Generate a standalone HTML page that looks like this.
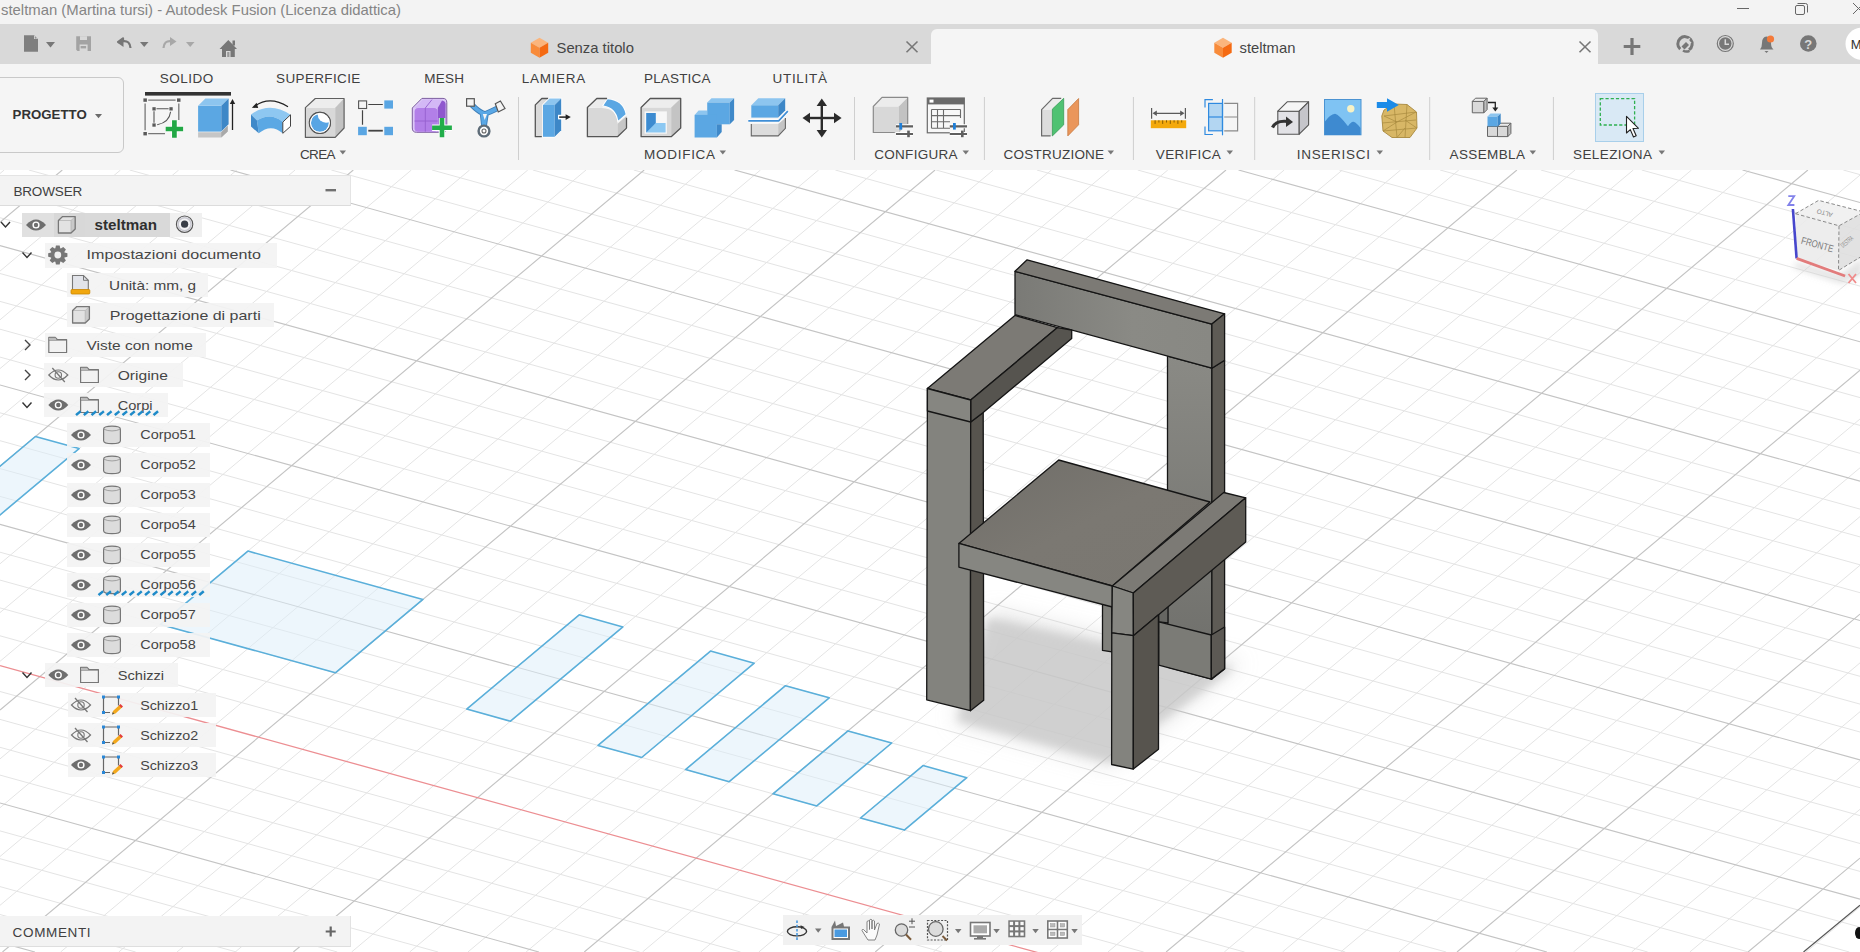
<!DOCTYPE html>
<html><head><meta charset="utf-8"><title>steltman - Autodesk Fusion</title>
<style>
html,body{margin:0;padding:0}
body{width:1860px;height:952px;overflow:hidden;position:relative;background:#fff;font-family:"Liberation Sans",sans-serif}
.abs{position:absolute}
svg text{font-family:"Liberation Sans",sans-serif}
</style></head><body>
<!-- 3D viewport -->
<svg class="abs" style="left:0;top:0" width="1860" height="952" viewBox="0 0 1860 952">
<defs>
<linearGradient id="gBackF" x1="0" y1="0" x2="1" y2="0"><stop offset="0" stop-color="#7a7a76"/><stop offset="0.6" stop-color="#8a8a85"/><stop offset="1" stop-color="#888883"/></linearGradient>
<linearGradient id="gLegR" x1="0" y1="0" x2="0" y2="1"><stop offset="0" stop-color="#8a8a85"/><stop offset="1" stop-color="#6e6e6a"/></linearGradient>
<linearGradient id="gSeat" x1="0" y1="0" x2="1" y2="1"><stop offset="0" stop-color="#6f6d68"/><stop offset="0.5" stop-color="#7b7872"/><stop offset="1" stop-color="#7a7771"/></linearGradient>
<clipPath id="vp"><rect x="0" y="170" width="1860" height="782"/></clipPath>
<filter id="blur3" x="-50%" y="-50%" width="200%" height="200%"><feGaussianBlur stdDeviation="3"/></filter>
<filter id="blur4" x="-30%" y="-30%" width="160%" height="160%"><feGaussianBlur stdDeviation="4"/></filter>
<filter id="blur8" x="-30%" y="-30%" width="160%" height="160%"><feGaussianBlur stdDeviation="10"/></filter>
</defs>
<g clip-path="url(#vp)">
<rect x="0" y="170" width="1860" height="782" fill="#ffffff"/>
<path d="M0.0 173.5L4.2 170.0M0.0 271.1L120.5 170.0M0.0 319.8L178.7 170.0M0.0 368.6L236.9 170.0M0.0 417.4L295.1 170.0M0.0 515.0L411.4 170.0M0.0 563.8L469.6 170.0M0.0 612.6L527.8 170.0M0.0 661.3L586.0 170.0M0.0 758.9L702.4 170.0M0.0 807.7L760.5 170.0M0.0 856.5L818.7 170.0M0.0 905.3L876.9 170.0M60.6 952.0L993.3 170.0M118.8 952.0L1051.5 170.0M177.0 952.0L1109.6 170.0M235.2 952.0L1167.8 170.0M351.6 952.0L1284.2 170.0M409.7 952.0L1342.4 170.0M467.9 952.0L1400.6 170.0M526.1 952.0L1458.8 170.0M642.5 952.0L1575.1 170.0M700.7 952.0L1633.3 170.0M758.8 952.0L1691.5 170.0M817.0 952.0L1749.7 170.0M933.4 952.0L1860.0 175.1M991.6 952.0L1860.0 223.8M1049.8 952.0L1860.0 272.6M1107.9 952.0L1860.0 321.4M1224.3 952.0L1860.0 419.0M1282.5 952.0L1860.0 467.8M1340.7 952.0L1860.0 516.6M1398.9 952.0L1860.0 565.3M1515.2 952.0L1860.0 662.9M1573.4 952.0L1860.0 711.7M1631.6 952.0L1860.0 760.5M1689.8 952.0L1860.0 809.3M1806.1 952.0L1860.0 906.8M0.0 914.5L135.7 952.0M0.0 886.6L236.5 952.0M0.0 858.7L337.3 952.0M0.0 830.9L438.1 952.0M0.0 775.1L639.7 952.0M0.0 747.3L740.5 952.0M0.0 719.4L841.3 952.0M0.0 691.5L942.1 952.0M0.0 635.8L1143.7 952.0M-0.0 607.9L1244.5 952.0M0.0 580.1L1345.3 952.0M0.0 552.2L1446.1 952.0M-0.0 496.4L1647.7 952.0M-0.0 468.6L1748.5 952.0M-0.0 440.7L1849.3 952.0M0.0 412.8L1860.0 927.1M0.0 357.1L1860.0 871.4M0.0 329.2L1860.0 843.5M0.0 301.4L1860.0 815.6M0.0 273.5L1860.0 787.7M0.0 217.7L1860.0 732.0M0.0 189.9L1860.0 704.1M28.9 170.0L1860.0 676.3M129.7 170.0L1860.0 648.4M331.3 170.0L1860.0 592.7M432.1 170.0L1860.0 564.8M532.9 170.0L1860.0 536.9M633.7 170.0L1860.0 509.1M835.3 170.0L1860.0 453.3M936.1 170.0L1860.0 425.4M1036.9 170.0L1860.0 397.6M1137.7 170.0L1860.0 369.7M1339.3 170.0L1860.0 314.0M1440.1 170.0L1860.0 286.1M1540.9 170.0L1860.0 258.2M1641.7 170.0L1860.0 230.4M1843.3 170.0L1860.0 174.6" stroke="#e4e4e4" stroke-width="1" fill="none"/>
<path d="M0.0 222.3L62.3 170.0M0.0 466.2L353.3 170.0M0.0 710.1L644.2 170.0M2.5 952.0L935.1 170.0M293.4 952.0L1226.0 170.0M584.3 952.0L1516.9 170.0M875.2 952.0L1807.9 170.0M1166.1 952.0L1860.0 370.2M1457.0 952.0L1860.0 614.1M1748.0 952.0L1860.0 858.1M0.0 942.4L34.9 952.0M0.0 803.0L538.9 952.0M0.0 524.3L1546.9 952.0M0.0 385.0L1860.0 899.2M0.0 245.6L1860.0 759.9M230.5 170.0L1860.0 620.5M734.5 170.0L1860.0 481.2M1238.5 170.0L1860.0 341.8M1742.5 170.0L1860.0 202.5" stroke="#c4c4c4" stroke-width="1.15" fill="none"/>
<path d="M0.0 663.7L1042.9 952.0" stroke="#ec8e92" stroke-width="1.3" fill="none" transform="translate(0,2)"/>
<g fill="#dcedfa" fill-opacity="0.5" stroke="#5aafda" stroke-width="1.6" stroke-linejoin="round"><polygon points="247.9,551.1 422.9,599.4 335.4,672.8 160.4,624.4"/><polygon points="35.4,436.5 79.1,448.6 -58.4,563.9 -102.1,551.8"/><polygon points="579.2,614.8 622.9,626.9 510.5,721.2 466.7,709.1"/><polygon points="710.5,651.1 754.2,663.2 641.7,757.5 598.0,745.4"/><polygon points="785.5,685.7 829.2,697.8 729.2,781.7 685.5,769.6"/><polygon points="848.0,730.9 891.7,743.0 816.8,805.9 773.0,793.8"/><polygon points="923.0,765.6 966.8,777.7 904.3,830.1 860.5,818.0"/></g>
<polygon points="992,610 1105,636 1242,662 1162,726 1112,766 954,722" fill="#c4c4c4" fill-opacity="0.45" filter="url(#blur8)"/><polygon points="988,618 1105,644 1234,668 1160,722 1112,763 957,721" fill="#c9c9c9" fill-opacity="0.75" filter="url(#blur4)"/>
<g stroke="#151515" stroke-width="1.3" stroke-linejoin="round"><polygon points="1167.5,356 1211.9,368.2 1211.9,679 1167.5,667" fill="url(#gLegR)"/><polygon points="1211.9,368.2 1224.6,360.3 1224.6,669 1211.9,679" fill="#5e5b55"/><polygon points="1158.4,600 1168,600 1168,623 1158.8,621.8" fill="#666662"/><polygon points="1158.8,621.8 1211.3,635 1211.3,679.1 1158.8,665.1" fill="#7b7b76"/><polygon points="1211.3,635 1224.6,627 1224.6,668.8 1211.3,679.1" fill="#5c5954"/><polygon points="1015,271.3 1211.9,324.1 1211.9,368.2 1015,314.6" fill="url(#gBackF)"/><polygon points="1027.1,259.8 1224.6,313.8 1211.9,324.1 1015,271.3" fill="#7c7a75"/><polygon points="1211.9,324.1 1224.6,313.8 1224.6,360.3 1211.9,368.2" fill="#5e5b55"/><polygon points="927.4,388.5 970.7,400 970.4,710.7 926.7,699.8" fill="#83837e"/><polygon points="970.7,422 983.2,412.5 983.7,700.2 970.4,710.7" fill="#57544e"/><polygon points="1014.9,315.4 1057.5,327.6 970.7,400 927.4,388.5" fill="#7c7a75"/><polygon points="970.7,400 1057.5,327.6 1071.7,330 1071.7,338.5 983.2,412.5 970.7,422" fill="#56544f"/><polygon points="927.4,388.5 970.7,400 970.7,422 927.4,411" fill="#868681"/><polygon points="1102.5,598 1111.8,600 1111.8,651.9 1102.5,650.4" fill="#80807b"/><polygon points="1058.7,460 1210,502 1112.3,586 958.9,543.4" fill="url(#gSeat)"/><polygon points="958.9,543.4 1112.3,586 1112.3,607 958.9,567.1" fill="#868681"/><polygon points="1112.3,586 1223.7,492.5 1245.7,497.8 1133.3,593" fill="#7c7a75"/><polygon points="1112.3,586 1133.3,593 1133.4,635.7 1111.8,632.8" fill="#868681"/><polygon points="1133.3,593 1245.7,497.8 1245.7,541.9 1133.4,635.7" fill="#5e5b55"/><polygon points="1111.8,632.8 1133.4,635.7 1133.3,769.1 1111.6,764.5" fill="#83837e"/><polygon points="1133.4,635.7 1158.4,614.8 1158.5,749.2 1133.3,769.1" fill="#57544e"/></g>

<g>
<polygon points="1796,262 1840,274 1862,258 1862,275 1842,284 1794,268" fill="#d0d0d0" fill-opacity="0.6" filter="url(#blur3)"/>
<polygon points="1795.5,213.7 1839,225.8 1838.5,270.5 1796.6,258.4" fill="#ebebeb" fill-opacity="0.88"/>
<polygon points="1818.6,200.4 1864,212 1839,225.8 1795.5,213.7" fill="#efefef" fill-opacity="0.88"/>
<polygon points="1839,225.8 1864,212 1864,256 1838.5,270.5" fill="#dedede" fill-opacity="0.88"/>
<g stroke="#8a8a8a" stroke-width="1" stroke-dasharray="3.5 2.2" fill="none">
<path d="M1795.5 213.7L1818.6 200.4L1864 212M1795.5 213.7L1839 225.8L1864 212M1839 225.8L1838.5 270.5L1862 256"/>
</g>
<text x="0" y="0" font-size="10" fill="#7a7a7a" transform="translate(1800.5,243.5) rotate(15.5)" textLength="33" lengthAdjust="spacingAndGlyphs">FRONTE</text>
<text x="0" y="0" font-size="6.5" fill="#8a8a8a" transform="translate(1833,213) rotate(195)" textLength="16" lengthAdjust="spacingAndGlyphs">ALTO</text>
<text x="0" y="0" font-size="7" fill="#8a8a8a" transform="translate(1843,248) rotate(-40)" textLength="14" lengthAdjust="spacingAndGlyphs">DESTRA</text>
<path d="M1792.9 209L1796.6 258.4" stroke="#4646cc" stroke-width="2.6"/>
<path d="M1796.6 258.4L1845.1 276" stroke="#e27c7c" stroke-width="2.8"/>
<path d="M1788.3 196.2H1794.2L1788.3 205H1794.4" stroke="#8282ea" stroke-width="1.8" fill="none"/>
<path d="M1848.5 274L1856 283M1856 274L1848.5 283" stroke="#f08a8a" stroke-width="1.8"/>
</g>
<path d="M1803.5 952L1860 905.3" stroke="#555" stroke-width="1.2"/>
<ellipse cx="1859" cy="933" rx="4" ry="6" fill="#111"/>

</g>
</svg>

<!-- title bar -->
<div class="abs" style="left:0;top:0;width:1860px;height:24px;background:#f3f3f3"></div>
<!-- tab bar -->
<div class="abs" style="left:0;top:24px;width:1860px;height:40px;background:#d9d9d9"></div>
<div class="abs" style="left:931px;top:29px;width:667px;height:35px;background:#f4f4f4;border-radius:6px 6px 0 0;background:#f5f5f5"></div>
<!-- toolbar -->
<div class="abs" style="left:0;top:64px;width:1860px;height:106px;background:#f5f5f5"></div>
<div class="abs" style="left:-8px;top:77px;width:130px;height:74px;border:1px solid #c9c9c9;border-radius:6px;background:#f5f5f5"></div>
<div class="abs" style="left:1595px;top:93px;width:47px;height:47px;background:#d9e9f5;border:1px solid #a8cfea"></div>

<!-- browser panel -->
<div class="abs" style="left:0;top:175px;width:350px;height:29px;background:#f3f3f3;border-top:1px solid #e4e4e4;border-bottom:1px solid #dcdcdc;border-right:1px solid #e4e4e4"></div>
<div class="abs" style="left:22px;top:213px;width:32px;height:24px;background:#e0e0e0"></div>
<div class="abs" style="left:54px;top:213px;width:31px;height:24px;background:#d8d8d8"></div>
<div class="abs" style="left:85px;top:213px;width:85px;height:24px;background:#d9d9d9"></div>
<div class="abs" style="left:170px;top:213px;width:32px;height:24px;background:#f0f0f0"></div>
<div class="abs" style="left:44.6px;top:243px;width:232.00000000000003px;height:25px;background:rgba(243,243,243,0.93)"></div>
<div class="abs" style="left:67.2px;top:272.5px;width:141.3px;height:24.5px;background:rgba(243,243,243,0.93)"></div>
<div class="abs" style="left:67.2px;top:302.6px;width:206.40000000000003px;height:24.399999999999977px;background:rgba(243,243,243,0.93)"></div>
<div class="abs" style="left:44.6px;top:332.7px;width:161.4px;height:24.30000000000001px;background:rgba(243,243,243,0.93)"></div>
<div class="abs" style="left:44.4px;top:363px;width:138.29999999999998px;height:24px;background:rgba(243,243,243,0.93)"></div>
<div class="abs" style="left:44.4px;top:393px;width:123.6px;height:24px;background:rgba(243,243,243,0.93)"></div>
<div class="abs" style="left:67.4px;top:423.3px;width:143.1px;height:24.0px;background:rgba(243,243,243,0.93)"></div>
<div class="abs" style="left:67.4px;top:453.3px;width:143.1px;height:24.0px;background:rgba(243,243,243,0.93)"></div>
<div class="abs" style="left:67.4px;top:483.3px;width:143.1px;height:24.0px;background:rgba(243,243,243,0.93)"></div>
<div class="abs" style="left:67.4px;top:513.3px;width:143.1px;height:24.0px;background:rgba(243,243,243,0.93)"></div>
<div class="abs" style="left:67.4px;top:543.3px;width:143.1px;height:24.0px;background:rgba(243,243,243,0.93)"></div>
<div class="abs" style="left:67.4px;top:573.3px;width:143.1px;height:24.0px;background:rgba(243,243,243,0.93)"></div>
<div class="abs" style="left:67.4px;top:603.3px;width:143.1px;height:24.0px;background:rgba(243,243,243,0.93)"></div>
<div class="abs" style="left:67.4px;top:633.3px;width:143.1px;height:24.0px;background:rgba(243,243,243,0.93)"></div>
<div class="abs" style="left:45px;top:663px;width:132.6px;height:24px;background:rgba(243,243,243,0.93)"></div>
<div class="abs" style="left:67.6px;top:693px;width:148.20000000000002px;height:24px;background:rgba(243,243,243,0.93)"></div>
<div class="abs" style="left:67.6px;top:723px;width:148.20000000000002px;height:24px;background:rgba(243,243,243,0.93)"></div>
<div class="abs" style="left:67.6px;top:753px;width:148.20000000000002px;height:24px;background:rgba(243,243,243,0.93)"></div>
<!-- comments -->
<div class="abs" style="left:0;top:916px;width:350px;height:30px;background:#f3f3f3;border-right:1px solid #e2e2e2;border-bottom:1px solid #dedede"></div>
<!-- nav bar -->
<div class="abs" style="left:783px;top:915px;width:299px;height:30px;background:#f1f1f1"></div>

<svg class="abs" style="left:0;top:0" width="1860" height="952" viewBox="0 0 1860 952">
<text x="1" y="15" font-size="15" font-weight="400" fill="#858585" text-anchor="start" textLength="400" lengthAdjust="spacingAndGlyphs" >steltman (Martina tursi) - Autodesk Fusion (Licenza didattica)</text>
<text x="556.5" y="52.8" font-size="15" font-weight="400" fill="#454545" text-anchor="start" textLength="77.4" lengthAdjust="spacingAndGlyphs" >Senza titolo</text>
<text x="1239.5" y="52.8" font-size="15" font-weight="400" fill="#454545" text-anchor="start" textLength="55.9" lengthAdjust="spacingAndGlyphs" >steltman</text>
<text x="12.6" y="119" font-size="13.5" font-weight="700" fill="#333" text-anchor="start" textLength="74.1" lengthAdjust="spacingAndGlyphs" >PROGETTO</text>
<polygon points="95,114 102,114 98.5,118.2" fill="#6b6b6b"/>
<text x="159.8" y="82.8" font-size="13.5" font-weight="400" fill="#404040" text-anchor="start" textLength="53.4" lengthAdjust="spacing" >SOLIDO</text>
<text x="276.1" y="82.8" font-size="13.5" font-weight="400" fill="#404040" text-anchor="start" textLength="84.2" lengthAdjust="spacing" >SUPERFICIE</text>
<text x="424.2" y="82.8" font-size="13.5" font-weight="400" fill="#404040" text-anchor="start" textLength="39.9" lengthAdjust="spacing" >MESH</text>
<text x="521.7" y="82.8" font-size="13.5" font-weight="400" fill="#404040" text-anchor="start" textLength="63.6" lengthAdjust="spacing" >LAMIERA</text>
<text x="644" y="82.8" font-size="13.5" font-weight="400" fill="#404040" text-anchor="start" textLength="66.4" lengthAdjust="spacing" >PLASTICA</text>
<text x="772.5" y="82.8" font-size="13.5" font-weight="400" fill="#404040" text-anchor="start" textLength="54.5" lengthAdjust="spacing" >UTILITÀ</text>
<rect x="145" y="92" width="86" height="3.6" fill="#333"/>
<text x="300" y="158.9" font-size="13.5" font-weight="400" fill="#404040" text-anchor="start" textLength="35.6" lengthAdjust="spacing" >CREA</text>
<polygon points="339.5,150.5 346,150.5 342.75,154.4" fill="#777"/>
<text x="644" y="158.9" font-size="13.5" font-weight="400" fill="#404040" text-anchor="start" textLength="71.1" lengthAdjust="spacing" >MODIFICA</text>
<polygon points="719.5,150.5 726,150.5 722.75,154.4" fill="#777"/>
<text x="874.2" y="158.9" font-size="13.5" font-weight="400" fill="#404040" text-anchor="start" textLength="83.4" lengthAdjust="spacing" >CONFIGURA</text>
<polygon points="962.5,150.5 969,150.5 965.75,154.4" fill="#777"/>
<text x="1003.6" y="158.9" font-size="13.5" font-weight="400" fill="#404040" text-anchor="start" textLength="100.5" lengthAdjust="spacing" >COSTRUZIONE</text>
<polygon points="1107.5,150.5 1114,150.5 1110.75,154.4" fill="#777"/>
<text x="1155.8" y="158.9" font-size="13.5" font-weight="400" fill="#404040" text-anchor="start" textLength="65" lengthAdjust="spacing" >VERIFICA</text>
<polygon points="1226.5,150.5 1233,150.5 1229.75,154.4" fill="#777"/>
<text x="1296.7" y="158.9" font-size="13.5" font-weight="400" fill="#404040" text-anchor="start" textLength="73.3" lengthAdjust="spacing" >INSERISCI</text>
<polygon points="1376.5,150.5 1383,150.5 1379.75,154.4" fill="#777"/>
<text x="1449.6" y="158.9" font-size="13.5" font-weight="400" fill="#404040" text-anchor="start" textLength="75.4" lengthAdjust="spacing" >ASSEMBLA</text>
<polygon points="1529.5,150.5 1536,150.5 1532.75,154.4" fill="#777"/>
<text x="1573" y="158.9" font-size="13.5" font-weight="400" fill="#404040" text-anchor="start" textLength="79" lengthAdjust="spacing" >SELEZIONA</text>
<polygon points="1658.5,150.5 1665,150.5 1661.75,154.4" fill="#777"/>
<rect x="518.0" y="97" width="1" height="63" fill="#cfcfcf"/>
<rect x="854.0" y="97" width="1" height="63" fill="#cfcfcf"/>
<rect x="983.9" y="97" width="1" height="63" fill="#cfcfcf"/>
<rect x="1132.9" y="97" width="1" height="63" fill="#cfcfcf"/>
<rect x="1254.2" y="97" width="1" height="63" fill="#cfcfcf"/>
<rect x="1429.2" y="97" width="1" height="63" fill="#cfcfcf"/>
<rect x="1552.9" y="97" width="1" height="63" fill="#cfcfcf"/>
<text x="13.4" y="195.8" font-size="13.5" font-weight="400" fill="#404040" text-anchor="start" textLength="68.9" lengthAdjust="spacing" >BROWSER</text>
<rect x="325.5" y="189" width="10.5" height="2.4" fill="#707070"/>
<text x="12.6" y="936.8" font-size="13.5" font-weight="400" fill="#404040" text-anchor="start" textLength="78" lengthAdjust="spacing" >COMMENTI</text>
<path d="M330.7 926.5v10M325.7 931.5h10" stroke="#666" stroke-width="2.2"/>
<text x="94.6" y="229.7" font-size="15" font-weight="700" fill="#2f2f2f" text-anchor="start" textLength="62.4" lengthAdjust="spacingAndGlyphs" >steltman</text>
<text x="86.6" y="259.2" font-size="13.5" font-weight="400" fill="#454545" text-anchor="start" textLength="174.3" lengthAdjust="spacingAndGlyphs" >Impostazioni documento</text>
<text x="109.1" y="290" font-size="13.5" font-weight="400" fill="#454545" text-anchor="start" textLength="87" lengthAdjust="spacingAndGlyphs" >Unità: mm, g</text>
<text x="109.7" y="320" font-size="13.5" font-weight="400" fill="#454545" text-anchor="start" textLength="151" lengthAdjust="spacingAndGlyphs" >Progettazione di parti</text>
<text x="86.6" y="350" font-size="13.5" font-weight="400" fill="#454545" text-anchor="start" textLength="106.2" lengthAdjust="spacingAndGlyphs" >Viste con nome</text>
<text x="117.7" y="379.5" font-size="13.5" font-weight="400" fill="#454545" text-anchor="start" textLength="50.3" lengthAdjust="spacingAndGlyphs" >Origine</text>
<text x="117.7" y="409.5" font-size="13.5" font-weight="400" fill="#454545" text-anchor="start" textLength="34.9" lengthAdjust="spacingAndGlyphs" >Corpi</text>
<text x="140.2" y="439.3" font-size="13.5" font-weight="400" fill="#454545" text-anchor="start" textLength="55.5" lengthAdjust="spacingAndGlyphs" >Corpo51</text>
<text x="140.2" y="469.3" font-size="13.5" font-weight="400" fill="#454545" text-anchor="start" textLength="55.5" lengthAdjust="spacingAndGlyphs" >Corpo52</text>
<text x="140.2" y="499.3" font-size="13.5" font-weight="400" fill="#454545" text-anchor="start" textLength="55.5" lengthAdjust="spacingAndGlyphs" >Corpo53</text>
<text x="140.2" y="529.3" font-size="13.5" font-weight="400" fill="#454545" text-anchor="start" textLength="55.5" lengthAdjust="spacingAndGlyphs" >Corpo54</text>
<text x="140.2" y="559.3" font-size="13.5" font-weight="400" fill="#454545" text-anchor="start" textLength="55.5" lengthAdjust="spacingAndGlyphs" >Corpo55</text>
<text x="140.2" y="589.3" font-size="13.5" font-weight="400" fill="#454545" text-anchor="start" textLength="55.5" lengthAdjust="spacingAndGlyphs" >Corpo56</text>
<text x="140.2" y="619.3" font-size="13.5" font-weight="400" fill="#454545" text-anchor="start" textLength="55.5" lengthAdjust="spacingAndGlyphs" >Corpo57</text>
<text x="140.2" y="649.3" font-size="13.5" font-weight="400" fill="#454545" text-anchor="start" textLength="55.5" lengthAdjust="spacingAndGlyphs" >Corpo58</text>
<text x="117.7" y="679.5" font-size="13.5" font-weight="400" fill="#454545" text-anchor="start" textLength="46.4" lengthAdjust="spacingAndGlyphs" >Schizzi</text>
<text x="140.2" y="709.5" font-size="13.5" font-weight="400" fill="#454545" text-anchor="start" textLength="58" lengthAdjust="spacingAndGlyphs" >Schizzo1</text>
<text x="140.2" y="739.5" font-size="13.5" font-weight="400" fill="#454545" text-anchor="start" textLength="58" lengthAdjust="spacingAndGlyphs" >Schizzo2</text>
<text x="140.2" y="769.5" font-size="13.5" font-weight="400" fill="#454545" text-anchor="start" textLength="58" lengthAdjust="spacingAndGlyphs" >Schizzo3</text>
<g fill="#5a5a5a"><rect x="143.4" y="98.4" width="3.5" height="3.4"/><rect x="177" y="98.4" width="3.5" height="3.4"/><rect x="143.4" y="132" width="3.5" height="3.4"/><rect x="152.4" y="107.2" width="3.3" height="3.3"/><rect x="169.4" y="107.2" width="3.3" height="3.3"/><rect x="152.4" y="123.4" width="3.3" height="3.3"/></g>
<path d="M148.2 100.1H175.6M145.1 103.5V130.2M148.2 133.7H165M178.8 103.5V120" stroke="#777" stroke-width="1.3"/>
<path d="M156.5 108.8H168.6M154 111.3V122.7M170.6 111.8Q169.3 122.5 157.2 124.8" stroke="#555" stroke-width="1.1" fill="none"/>
<path d="M165.8 129H183.2M174.4 120.4V137.6" stroke="#fff" stroke-width="6.4"/>
<path d="M165.70000000000002 129H183.1M174.4 120.3V137.7" stroke="#22a845" stroke-width="4.7"/>
<polygon points="198.1,132.3 221.3,132.3 227.7,125.7 227.7,131.4 221.3,137.6 198.1,137.6" fill="#c6c6c6"/><polygon points="221.3,132.3 227.7,125.7 227.7,131.4 221.3,137.6" fill="#a9a9a9"/>
<g><polygon points="198.1,105.8 221.3,105.8 221.3,131.6 198.1,131.6" fill="#5ba7e3"/><polygon points="198.1,105.8 205.4,98.5 228.6,98.5 221.3,105.8" fill="#8dc5ef"/><polygon points="221.3,105.8 228.6,98.5 228.6,124.3 221.3,131.6" fill="#3d87c7"/></g>
<path d="M232.5 130V102" stroke="#222" stroke-width="1.3"/><polygon points="229.8,104 232.5,99 235.2,104" fill="#222"/>
<path d="M255 106Q270 95.5 288 106.8" stroke="#222" stroke-width="1.2" fill="none"/><polygon points="251.8,107.8 256.6,102.8 258.2,108" fill="#222"/>
<path d="M251 114.4Q270 101 290.5 114.8L282.8 122.1Q271 112 257 120.4Z" fill="#8ec7f1"/>
<path d="M257 120.4Q271 112 282.8 122.1V133.3Q271 123 258.7 133.3Z" fill="#5ba8e4"/>
<polygon points="251,114.4 257,120.4 258.7,133.3 251,126.4" fill="#3f89c9"/>
<polygon points="282.8,122.1 290.5,114.8 290.5,126.4 282.8,133.3" fill="#fff" stroke="#444" stroke-width="1"/>
<polygon points="305.6,107.8 335.2,107.8 335.2,137.2 305.6,137.2" fill="#d8d8d8"/><polygon points="305.6,107.8 315.3,98.6 344,98.6 335.2,107.8" fill="#ededed"/><polygon points="335.2,107.8 344,98.6 344,128 335.2,137.2" fill="#c2c2c2"/>
<polygon points="305.4,107.6 315.3,98.5 344.1,98.5 344.1,128 335.2,137.4 305.4,137.4" fill="none" stroke="#5f5f5f" stroke-width="1.2" stroke-linejoin="round"/>
<circle cx="319.9" cy="122.9" r="10.5" fill="#fff" stroke="#555" stroke-width="1.1"/><circle cx="319.9" cy="122.9" r="8.9" fill="#58a5e4"/>
<clipPath id="holeclip"><circle cx="319.9" cy="122.9" r="10"/></clipPath><circle cx="326" cy="114.5" r="8.3" fill="#fff" clip-path="url(#holeclip)"/><circle cx="319.9" cy="122.9" r="10.5" fill="none" stroke="#555" stroke-width="1.1"/><circle cx="319.9" cy="122.9" r="9.6" fill="none" stroke="#fff" stroke-width="0.9"/>
<path d="M368.3 104.5H382.8M362.5 110.3V124.8" stroke="#444" stroke-width="1.2"/><path d="M368.3 130.7H382.8" stroke="#444" stroke-width="1.8"/>
<rect x="358.6" y="100.9" width="8" height="7.6" fill="#f4f4f4" stroke="#555" stroke-width="1.1"/>
<g fill="#5aa6e3"><rect x="384.3" y="100.4" width="8.7" height="8.2"/><rect x="358.1" y="126.8" width="8.7" height="8.4"/><rect x="384.3" y="126.8" width="8.7" height="8.4"/></g>
<path d="M421.9 98.4H443Q446.8 98.4 446.8 102.5V128Q446.8 132.3 442.5 132.3H416.5Q412.3 132.3 412.3 128V108Z" fill="#dcc8f7" stroke="#7d5ea0" stroke-width="1"/>
<path d="M414.6 108L423 99.6H442L437.7 108Z" fill="#d3b8f6"/>
<path d="M437.7 108L442 100.5Q445.6 101 445.6 104V125L437.7 131.7Z" fill="#8f57ce"/>
<rect x="414.6" y="108" width="23.1" height="23.7" rx="3.5" fill="#b27fe8"/>
<path d="M425.3 108V131.7M414.6 121H437.7M425.3 108L432 99.6" stroke="#9560cf" stroke-width="0.9" fill="none"/>
<path d="M432.1 127.7H451.9M442 118.1V137.3" stroke="#fff" stroke-width="6.5"/><path d="M432.1 127.7H451.9M442 118.1V137.3" stroke="#22ad4a" stroke-width="4.6"/>
<path d="M472 105Q478 111 482.5 113L484 126.5M496 109Q490 112 486 113.5L484 126.5" stroke="#3f7fb8" stroke-width="5.6" fill="none" stroke-linecap="round"/>
<path d="M472 105Q478 111 482.5 113L484 126.5M496 109Q490 112 486 113.5L484 126.5" stroke="#5aa8e6" stroke-width="3.8" fill="none" stroke-linecap="round"/>
<polygon points="482,112 488,112 484.6,122" fill="#5aa8e6"/><polygon points="482.8,114 487,114 484.7,120" fill="#f4f4f4"/>
<rect x="466.6" y="98.7" width="7.7" height="7.5" fill="#f4f4f4" stroke="#555" stroke-width="1.2"/>
<polygon points="495.3,103.8 500.4,101 505,108.5 498.3,112" fill="#f4f4f4" stroke="#555" stroke-width="1.2"/>
<circle cx="484" cy="131" r="6.6" fill="#5e6c78"/><circle cx="484" cy="131" r="4.2" fill="#fff"/><circle cx="484" cy="131" r="2" fill="none" stroke="#666" stroke-width="1.1"/>
<polygon points="535.3,104.9 541.8,98.5 548.2,98.5 543,104.9 543,136.7 535.3,136.7" fill="#dadada"/>
<path d="M548.2 98.5H541.8L535.3 104.9V136.7H541.8" stroke="#555" stroke-width="1.3" fill="none" stroke-linejoin="round"/>
<polygon points="542.3,104.6 549.2,97.8 562.2,97.8 562.2,130.1 555,137.4 542.3,137.4" fill="#fff"/>
<g><polygon points="543,105 554.7,105 554.7,136.8 543,136.8" fill="#5ba7e3"/><polygon points="543,105 549.5,98.5 561.2,98.5 554.7,105" fill="#8dc5ef"/><polygon points="554.7,105 561.2,98.5 561.2,130.3 554.7,136.8" fill="#3d87c7"/></g>
<rect x="558" y="114.8" width="4.2" height="4.6" fill="#fff"/><path d="M559.2 117.1H566.5" stroke="#222" stroke-width="1.5"/><polygon points="565.6,114.3 570.8,117.1 565.6,120" fill="#222"/>
<polygon points="587.4,107.5 596.8,98.5 607.1,98.5 602,107.9" fill="#ececec"/>
<path d="M587.4 107.9H602Q617.5 108.5 617.5 123.8V136.7H587.4Z" fill="#d8d8d8"/>
<polygon points="617.5,123.8 626.5,116.1 626.5,128.1 617.5,136.7" fill="#c6c6c6"/>
<path d="M607.1 98.5Q624 99.5 626.5 114.4L617.5 122.1Q615.5 108 602 105.8Z" fill="#fff"/><path d="M607.6 99.3Q622.8 100.5 625.6 114.2L618.3 120.6Q616 107.6 603.5 105.6Z" fill="#5ba7e3"/>
<path d="M607.1 98.5H596.8L587.4 107.5V136.7H617.5L626.5 128.1V117.8" stroke="#555" stroke-width="1.3" fill="none" stroke-linejoin="round"/>
<polygon points="641.1,107.5 671.2,107.5 671.2,136.7 641.1,136.7" fill="#d8d8d8"/><polygon points="641.1,107.5 650.2,98.5 680.7,98.5 671.2,107.5" fill="#ededed"/><polygon points="671.2,107.5 680.7,98.5 680.7,128.1 671.2,136.7" fill="#c4c4c4"/>
<polygon points="641.1,107.5 650.2,98.5 680.7,98.5 680.7,128.1 671.2,136.7 641.1,136.7" fill="none" stroke="#555" stroke-width="1.3" stroke-linejoin="round"/>
<rect x="644.6" y="111.4" width="22.3" height="22.3" fill="#f7f7f7"/><polygon points="646.3,113.1 655.7,113.1 655.7,123 665.6,123 665.6,132.4 646.3,132.4" fill="#8cc8f2"/><polygon points="646.3,113.1 655.7,113.1 655.7,123 646.3,132.4" fill="#3d8bd0"/>
<polygon points="707.2,102.5 711.5,98.2 734.1,98.2 729.8,102.5" fill="#8dc5ef"/>
<polygon points="694.6,114.9 698.6,110.6 707.2,110.6 707.2,114.9" fill="#8dc5ef"/>
<polygon points="707.2,102.5 729.8,102.5 729.8,124.3 707.2,124.3" fill="#5ba7e3"/>
<rect x="694.6" y="114.9" width="22.3" height="22.6" fill="#5ba7e3"/>
<polygon points="729.8,102.5 734.1,98.2 734.1,120 729.8,124.3" fill="#3f89c9"/>
<polygon points="716.9,124.3 721.7,124.3 721.7,132.1 716.9,137.5" fill="#3f89c9"/>
<polygon points="751.3,124 778.2,124 778.2,135.9 751.3,135.9" fill="#dcdcdc"/><polygon points="778.2,124 785.4,118.1 785.4,128.3 778.2,135.9" fill="#c4c4c4"/>
<path d="M751.3 124V135.9H778.2L785.4 128.3V118.1" stroke="#666" stroke-width="1.1" fill="none"/>
<path d="M748.3 120.8H778.7L787.8 111.1" stroke="#fff" stroke-width="3.2" fill="none"/><path d="M748.3 120.8H778.7L787.8 111.1" stroke="#3f8ed6" stroke-width="1.7" fill="none"/>
<g><polygon points="751.3,105.2 778.2,105.2 778.2,117.6 751.3,117.6" fill="#5ba7e3"/><polygon points="751.3,105.2 758.3,98.2 785.2,98.2 778.2,105.2" fill="#8dc5ef"/><polygon points="778.2,105.2 785.2,98.2 785.2,110.6 778.2,117.6" fill="#3d87c7"/></g>
<g fill="#2b2b2b"><path d="M820.6 104H823V132H820.6Z"/><path d="M808 116.8H836V119.2H808Z"/><polygon points="821.8,98.6 827,106 816.6,106"/><polygon points="821.8,137.4 827,130 816.6,130"/><polygon points="802.5,118 810,112.8 810,123.2"/><polygon points="841.6,118 834,112.8 834,123.2"/></g>
<g><polygon points="873.3,106.5 898.8,106.5 898.8,132.7 873.3,132.7" fill="#d8d8d8"/><polygon points="873.3,106.5 882.5,97.3 908,97.3 898.8,106.5" fill="#ececec"/><polygon points="898.8,106.5 908,97.3 908,123.5 898.8,132.7" fill="#c2c2c2"/></g>
<path d="M894.8 132.5H873.3V106.5L882 97.3H907.7V124" stroke="#8a8a8a" stroke-width="1.2" fill="none" stroke-linejoin="round"/>
<path d="M896 126.3H913M896 134H913" stroke="#fff" stroke-width="4"/><path d="M896 126.3H913M896 134H913" stroke="#5f5f5f" stroke-width="2.2"/><rect x="899.3" y="123" width="2.8" height="6.6" fill="#1f7fd8"/><rect x="907.2" y="130.6" width="2.6" height="6.6" fill="#5f5f5f"/>
<rect x="927.3" y="98" width="37" height="34.8" fill="#f7f7f7" stroke="#6a6a6a" stroke-width="1.2"/><rect x="927.3" y="98" width="37" height="6.4" fill="#6a6a6a"/><rect x="929.5" y="99.6" width="4" height="3" fill="#fff"/>
<path d="M931.5 109.5H960.5M931.5 115.6H960.5M931.5 121.8H950M931.5 128.2H950M931.5 109.5V128.2M937.5 109.5V128.2M943.5 109.5V128.2M960.5 109.5V118" stroke="#6a6a6a" stroke-width="1.1" fill="none"/>
<path d="M949.8 126.3H967M949.8 134H967" stroke="#fff" stroke-width="4"/><path d="M949.8 126.3H967M949.8 134H967" stroke="#5f5f5f" stroke-width="2.2"/><rect x="953" y="123" width="2.8" height="6.6" fill="#1f7fd8"/><rect x="961" y="130.6" width="2.6" height="6.6" fill="#5f5f5f"/>
<polygon points="1041.6,109.6 1052.4,109.6 1052.4,135.9 1041.6,135.9" fill="#dcdcdc"/><polygon points="1041.6,109.6 1052.6,98.3 1061.2,98.3 1052.4,109.1" fill="#ececec"/>
<path d="M1050.6 135.9H1041.6V109.6L1052.6 98.3H1061.2" stroke="#6a6a6a" stroke-width="1.2" fill="none" stroke-linejoin="round"/>
<polygon points="1052.4,109.1 1063.7,98.3 1063.7,124.8 1052.4,135.9" fill="#4fc272" stroke="#3a9a58" stroke-width="0.8"/>
<polygon points="1067.8,109.6 1078.6,98.5 1078.6,124.8 1067.8,135.9" fill="#ea965b" stroke="#c77a40" stroke-width="0.8"/>
<rect x="1150.8" y="120.3" width="35.4" height="7.9" fill="#f4a90b"/><path d="M1155.1 120.3v3.6M1158.9 120.3v2.2M1162.7 120.3v3.6M1166.5 120.3v2.2M1170.3 120.3v3.6M1174.1 120.3v2.2M1177.9 120.3v3.6M1181.7 120.3v2.2" stroke="#7a5200" stroke-width="0.9"/>
<path d="M1151.6 108V118.8M1185.4 108V118.8M1154 113.3H1183" stroke="#5a5a5a" stroke-width="1.2"/><polygon points="1152.5,113.3 1156.8,110.5 1156.8,116.1" fill="#5a5a5a"/><polygon points="1184.5,113.3 1180.2,110.5 1180.2,116.1" fill="#5a5a5a"/>
<rect x="1208.6" y="103.4" width="13.9" height="27.4" fill="#b3d6f2" stroke="#2f8ae0" stroke-width="1.2"/><path d="M1208.6 117H1222.5" stroke="#2f8ae0" stroke-width="1.2"/>
<path d="M1224.2 103.4H1237.6V130.8H1224.2M1224.2 117H1237.6" stroke="#8a8a8a" stroke-width="1.2" fill="none"/>
<path d="M1212.9 99.6H1205V107.4M1205 126.6V134.5H1212.9" stroke="#2f8ae0" stroke-width="1.2" fill="none"/><path d="M1222.5 99V135.3" stroke="#2f8ae0" stroke-width="1.2"/>
<g stroke="#555" stroke-width="1.1" stroke-linejoin="round"><polygon points="1277.8,111.2 1299.2,111.2 1299.2,134.2 1277.8,134.2" fill="#e2e2e6"/><polygon points="1277.8,111.2 1287.2,101.8 1308.6,101.8 1299.2,111.2" fill="#f6f6f6"/><polygon points="1299.2,111.2 1308.6,101.8 1308.6,124.8 1299.2,134.2" fill="#c5c5ca"/></g>
<path d="M1272.5 127.5Q1276 120 1288 121.5" stroke="#333" stroke-width="3.2" fill="none"/><polygon points="1286,116.5 1293,122 1286,127" fill="#333"/>
<rect x="1324.5" y="99.5" width="36.5" height="35.3" fill="#7fc3f3" stroke="#4b93d2" stroke-width="1"/><path d="M1325 135V121.5Q1330 114.5 1335 113.8Q1339 114.5 1348 126.3Q1351 121.5 1353.5 121.8Q1357 123 1360.5 128V135Z" fill="#3e8ad0"/><circle cx="1350.8" cy="108.8" r="3.7" fill="#f7f2c6"/>
<polygon points="1384,110 1394,104 1407,104.5 1416.5,112 1417,128 1410,137.5 1392,137.5 1383,131 1381.8,116" fill="#d8b766" stroke="#a8893e" stroke-width="0.9"/>
<path d="M1384 116L1416 112M1382 123L1416 120M1383 131L1416.8 128M1394 104L1397 137.5M1407 104.5L1405 137.5M1384 116L1397 122L1383 131M1397 122L1416 112M1405 120L1416.8 128M1397 137.5L1405 128" stroke="#a8893e" stroke-width="0.7" fill="none"/>
<polygon points="1376.8,102 1387,102 1387,98.3 1398.8,105 1387,111.8 1387,108 1376.8,108" fill="#1b8be8"/>
<g stroke="#666" stroke-width="1" stroke-linejoin="round"><polygon points="1472.3,101.4 1483.9,101.4 1483.9,112.8 1472.3,112.8" fill="#d9d9d9"/><polygon points="1472.3,101.4 1475.5,98.2 1487.1,98.2 1483.9,101.4" fill="#ebebeb"/><polygon points="1483.9,101.4 1487.1,98.2 1487.1,109.6 1483.9,112.8" fill="#bdbdbd"/></g>
<path d="M1488 102.5H1495.3V108" stroke="#222" stroke-width="1.3" fill="none"/><polygon points="1492.3,107.5 1498.3,107.5 1495.3,111.5" fill="#222"/>
<g stroke="#666" stroke-width="1" stroke-linejoin="round"><polygon points="1497.5,126.3 1507.8,126.3 1507.8,136.6 1497.5,136.6" fill="#d9d9d9"/><polygon points="1497.5,126.3 1500.6,123.2 1510.9,123.2 1507.8,126.3" fill="#ebebeb"/><polygon points="1507.8,126.3 1510.9,123.2 1510.9,133.5 1507.8,136.6" fill="#bdbdbd"/></g>
<g stroke="#666" stroke-width="1" stroke-linejoin="round"><polygon points="1487.5,126.41 1497.5,126.41 1497.5,136.41 1487.5,136.41" fill="#d9d9d9"/><polygon points="1487.5,126.41 1487.51,126.4 1497.51,126.4 1497.5,126.41" fill="#ebebeb"/><polygon points="1497.5,126.41 1497.51,126.4 1497.51,136.4 1497.5,136.41" fill="#bdbdbd"/></g>
<g><polygon points="1487.5,116.4 1497.7,116.4 1497.7,126.4 1487.5,126.4" fill="#5ba7e3"/><polygon points="1487.5,116.4 1490.5,113.4 1500.7,113.4 1497.7,116.4" fill="#8dc5ef"/><polygon points="1497.7,116.4 1500.7,113.4 1500.7,123.4 1497.7,126.4" fill="#3d87c7"/></g>
<rect x="1600.3" y="98.7" width="34.3" height="26.3" fill="none" stroke="#2fb050" stroke-width="1.3" stroke-dasharray="3.2 2"/>
<path d="M1626.5 116.3L1626.5 133L1630.3 129.6L1633.5 137L1636.2 135.8L1633 128.5L1638.5 128.3Z" fill="#fff" stroke="#222" stroke-width="1.1" stroke-linejoin="round"/>
<path d="M1737 8.5H1749" stroke="#666" stroke-width="1"/>
<rect x="1795.5" y="5.5" width="9" height="9" rx="1.5" fill="none" stroke="#666" stroke-width="1"/><path d="M1797.5 3.5H1805.5Q1807.5 3.5 1807.5 5.5V12.5" stroke="#666" stroke-width="1" fill="none"/>
<path d="M1853 3L1864 14M1864 3L1853 14" stroke="#666" stroke-width="1"/>
<path d="M24 35.2H34.2L38 39V51.8H24Z" fill="#7f7f7f"/><path d="M34 35.2V39H38Z" fill="#d9d9d9"/><path d="M34.8 36.5L36.8 38.5H34.8Z" fill="#7f7f7f"/>
<polygon points="46,42 55,42 50.5,47.5" fill="#777"/>
<path d="M76.2 36.2H91V51H77.5L76.2 49.7Z" fill="#a3a3a3"/><rect x="80" y="36.2" width="7" height="3.8" fill="#d9d9d9"/><rect x="79.6" y="44.5" width="8" height="6.5" fill="#d9d9d9"/><rect x="80.6" y="46" width="5.5" height="2.4" fill="#a3a3a3"/>
<path d="M117.5 42.5L123 38.5V41.2Q130 40.5 130.5 48" stroke="#777" stroke-width="2.2" fill="none" stroke-linejoin="round"/><polygon points="117,42.5 123.5,37.5 123.5,47" fill="#777"/>
<polygon points="140,42 148.5,42 144.2,47" fill="#777"/>
<path d="M163.5 48Q164 40.5 171 41.2" stroke="#a8a8a8" stroke-width="2.2" fill="none"/><polygon points="176.5,41.5 170,37 170,46" fill="#a8a8a8"/>
<polygon points="186,42 194.5,42 190.2,47" fill="#a8a8a8"/>
<path d="M219.5 49L228.3 40L237 49H234.8V57H222V49Z" fill="#777"/><rect x="232.5" y="40.5" width="2.5" height="5" fill="#777"/><rect x="226" y="51" width="4.5" height="6" fill="#d9d9d9"/><rect x="227.2" y="52" width="2.2" height="5" fill="#999"/>
<polygon points="539.5,37.8 548.2,42.8 539.5,47.8 530.8,42.8" fill="#fbb57c"/><polygon points="530.8,42.8 539.5,47.8 539.5,57.8 530.8,52.8" fill="#f88b3a"/><polygon points="539.5,47.8 548.2,42.8 548.2,52.8 539.5,57.8" fill="#f56a12"/>
<polygon points="1223,37.8 1231.7,42.8 1223,47.8 1214.3,42.8" fill="#fbb57c"/><polygon points="1214.3,42.8 1223,47.8 1223,57.8 1214.3,52.8" fill="#f88b3a"/><polygon points="1223,47.8 1231.7,42.8 1231.7,52.8 1223,57.8" fill="#f56a12"/>
<path d="M906.5 41.5L917.5 52.3M917.5 41.5L906.5 52.3" stroke="#777" stroke-width="1.6"/>
<path d="M1579.5 41.5L1590.5 52.3M1590.5 41.5L1579.5 52.3" stroke="#777" stroke-width="1.6"/>
<path d="M1632 38V55M1623.7 46.5H1640.3" stroke="#777" stroke-width="3.2"/>
<path d="M1680.2 49.2A7.2 7.2 0 1 1 1689 49.8" stroke="#777" stroke-width="3" fill="none"/><path d="M1683 50.5Q1686 52.5 1689.5 50.8" stroke="#777" stroke-width="2.4" fill="none"/><path d="M1684.5 43.5L1689.8 38.2M1687 46L1691 42" stroke="#d9d9d9" stroke-width="1.5"/><path d="M1681.5 46.5L1686 42L1689 45L1684.5 49.5Z" fill="#777"/>
<circle cx="1725.3" cy="43.5" r="8" fill="none" stroke="#777" stroke-width="1.2"/><circle cx="1725.3" cy="43.5" r="6.2" fill="#777"/><path d="M1725.3 39.2V44.3H1729" stroke="#d9d9d9" stroke-width="1.5" fill="none"/>
<path d="M1760 49.5Q1762 47.5 1762 43Q1762 37 1766.5 36.5Q1771 37 1771 43Q1771 47.5 1773.5 49.5Z" fill="#777"/><path d="M1764.5 51H1768.5L1766.5 53Z" fill="#777"/><circle cx="1770.5" cy="39" r="3.6" fill="#f47a3a"/>
<circle cx="1808.3" cy="43.5" r="8.3" fill="#777"/><text x="1808.3" y="48.5" font-size="13" font-weight="700" fill="#d9d9d9" text-anchor="middle">?</text>
<circle cx="1861.5" cy="43.8" r="16" fill="#fff"/><text x="1850.8" y="48.6" font-size="13" fill="#333">M</text>
<path d="M1 222L5.5 227L10 222" stroke="#333" stroke-width="1.4" fill="none"/>
<path d="M26 225Q36 214 46 225Q36 236 26 225Z" fill="#6e6e6e"/><circle cx="36" cy="225" r="3.6" fill="#fff"/><circle cx="36" cy="225" r="2.2" fill="#6e6e6e"/>
<path d="M58.4 220.5L62.599999999999994 216.6H75.19999999999999V229L71.0 233H58.4Z" fill="#e2e2e2"/><polygon points="71.0,220.5 75.19999999999999,216.6 75.19999999999999,229 71.0,233" fill="#c9c9c9"/><path d="M58.4 220.5H71.0V233M71.0 220.5L75.19999999999999 216.6" stroke="#b5b5b5" stroke-width="0.8" fill="none"/><path d="M58.4 220.5L62.599999999999994 216.6H75.19999999999999V229L71.0 233H58.4Z" fill="none" stroke="#777" stroke-width="1.3" stroke-linejoin="round"/>
<circle cx="184.6" cy="224.2" r="8.2" fill="#f4f4f6" stroke="#555" stroke-width="1.1"/><circle cx="184.6" cy="224.2" r="6.5" fill="none" stroke="#c8c8d0" stroke-width="1.5"/><circle cx="184.6" cy="224.2" r="3.6" fill="#3a3f48"/>
<path d="M22.5 252.5L27.0 257.5L31.5 252.5" stroke="#333" stroke-width="1.4" fill="none"/>
<polygon points="67.42,253.13 67.42,256.87 64.57,257.46 64.33,258.04 65.92,260.48 63.28,263.12 60.84,261.53 60.26,261.77 59.67,264.62 55.93,264.62 55.34,261.77 54.76,261.53 52.32,263.12 49.68,260.48 51.27,258.04 51.03,257.46 48.18,256.87 48.18,253.13 51.03,252.54 51.27,251.96 49.68,249.52 52.32,246.88 54.76,248.47 55.34,248.23 55.93,245.38 59.67,245.38 60.26,248.23 60.84,248.47 63.28,246.88 65.92,249.52 64.33,251.96 64.57,252.54" fill="#777"/><circle cx="57.8" cy="255" r="3.4" fill="#f0f0f0"/>
<path d="M72.5 291V275.5H83.5L88.3 280.3V291Z" fill="#e2e4ea" stroke="#777" stroke-width="1.1"/><path d="M83.5 275.5V280.3H88.3" stroke="#777" stroke-width="1" fill="none"/><rect x="71" y="289.5" width="18.8" height="4.5" rx="1" fill="#f1a70e" stroke="#c98500" stroke-width="0.8"/>
<path d="M72.6 310.5L76.8 306.6H89.4V319L85.2 323H72.6Z" fill="#e2e2e2"/><polygon points="85.2,310.5 89.4,306.6 89.4,319 85.2,323" fill="#c9c9c9"/><path d="M72.6 310.5H85.2V323M85.2 310.5L89.4 306.6" stroke="#b5b5b5" stroke-width="0.8" fill="none"/><path d="M72.6 310.5L76.8 306.6H89.4V319L85.2 323H72.6Z" fill="none" stroke="#777" stroke-width="1.3" stroke-linejoin="round"/>
<path d="M25 340L30 345L25 350" stroke="#444" stroke-width="1.4" fill="none"/>
<path d="M48.800000000000004 352.5V337.3H55.2L57.2 339.5H66.6V352.5Z" fill="#f2f2f2" stroke="#777" stroke-width="1.2" stroke-linejoin="round"/><path d="M48.800000000000004 340.1H66.6" stroke="#777" stroke-width="1"/><rect x="49.400000000000006" y="337.8" width="6" height="2" fill="#bbb"/>
<path d="M25 370L30 375L25 380" stroke="#444" stroke-width="1.4" fill="none"/>
<path d="M48.8 375Q58.3 365 67.8 375Q58.3 385 48.8 375Z" fill="none" stroke="#777" stroke-width="1.2"/><circle cx="58.3" cy="375" r="3.2" fill="none" stroke="#777" stroke-width="1.1"/><path d="M52.3 368L64.8 382" stroke="#777" stroke-width="1.3"/>
<path d="M80.6 382.5V367.3H87L89 369.5H98.4V382.5Z" fill="#f2f2f2" stroke="#777" stroke-width="1.2" stroke-linejoin="round"/><path d="M80.6 370.1H98.4" stroke="#777" stroke-width="1"/><rect x="81.2" y="367.8" width="6" height="2" fill="#bbb"/>
<path d="M22.5 402.5L27.0 407.5L31.5 402.5" stroke="#333" stroke-width="1.4" fill="none"/>
<path d="M48.3 405Q58.3 394 68.3 405Q58.3 416 48.3 405Z" fill="#6e6e6e"/><circle cx="58.3" cy="405" r="3.6" fill="#fff"/><circle cx="58.3" cy="405" r="2.2" fill="#6e6e6e"/>
<path d="M80.6 412.5V397.3H87L89 399.5H98.4V412.5Z" fill="#f2f2f2" stroke="#777" stroke-width="1.2" stroke-linejoin="round"/><path d="M80.6 400.1H98.4" stroke="#777" stroke-width="1"/><rect x="81.2" y="397.8" width="6" height="2" fill="#bbb"/>
<path d="M71 435Q81 424 91 435Q81 446 71 435Z" fill="#6e6e6e"/><circle cx="81" cy="435" r="3.6" fill="#fff"/><circle cx="81" cy="435" r="2.2" fill="#6e6e6e"/>
<path d="M103.6 429.2Q103.6 426.2 112 426.2Q120.4 426.2 120.4 429.2V440.7Q120.4 443.59999999999997 112 443.59999999999997Q103.6 443.59999999999997 103.6 440.7Z" fill="#dcdcdc" stroke="#777" stroke-width="1.2"/><path d="M103.6 429.2Q112 432.7 120.4 429.2" stroke="#999" stroke-width="0.9" fill="none"/>
<path d="M71 465Q81 454 91 465Q81 476 71 465Z" fill="#6e6e6e"/><circle cx="81" cy="465" r="3.6" fill="#fff"/><circle cx="81" cy="465" r="2.2" fill="#6e6e6e"/>
<path d="M103.6 459.2Q103.6 456.2 112 456.2Q120.4 456.2 120.4 459.2V470.7Q120.4 473.59999999999997 112 473.59999999999997Q103.6 473.59999999999997 103.6 470.7Z" fill="#dcdcdc" stroke="#777" stroke-width="1.2"/><path d="M103.6 459.2Q112 462.7 120.4 459.2" stroke="#999" stroke-width="0.9" fill="none"/>
<path d="M71 495Q81 484 91 495Q81 506 71 495Z" fill="#6e6e6e"/><circle cx="81" cy="495" r="3.6" fill="#fff"/><circle cx="81" cy="495" r="2.2" fill="#6e6e6e"/>
<path d="M103.6 489.2Q103.6 486.2 112 486.2Q120.4 486.2 120.4 489.2V500.7Q120.4 503.59999999999997 112 503.59999999999997Q103.6 503.59999999999997 103.6 500.7Z" fill="#dcdcdc" stroke="#777" stroke-width="1.2"/><path d="M103.6 489.2Q112 492.7 120.4 489.2" stroke="#999" stroke-width="0.9" fill="none"/>
<path d="M71 525Q81 514 91 525Q81 536 71 525Z" fill="#6e6e6e"/><circle cx="81" cy="525" r="3.6" fill="#fff"/><circle cx="81" cy="525" r="2.2" fill="#6e6e6e"/>
<path d="M103.6 519.2Q103.6 516.2 112 516.2Q120.4 516.2 120.4 519.2V530.7Q120.4 533.6 112 533.6Q103.6 533.6 103.6 530.7Z" fill="#dcdcdc" stroke="#777" stroke-width="1.2"/><path d="M103.6 519.2Q112 522.7 120.4 519.2" stroke="#999" stroke-width="0.9" fill="none"/>
<path d="M71 555Q81 544 91 555Q81 566 71 555Z" fill="#6e6e6e"/><circle cx="81" cy="555" r="3.6" fill="#fff"/><circle cx="81" cy="555" r="2.2" fill="#6e6e6e"/>
<path d="M103.6 549.2Q103.6 546.2 112 546.2Q120.4 546.2 120.4 549.2V560.7Q120.4 563.6 112 563.6Q103.6 563.6 103.6 560.7Z" fill="#dcdcdc" stroke="#777" stroke-width="1.2"/><path d="M103.6 549.2Q112 552.7 120.4 549.2" stroke="#999" stroke-width="0.9" fill="none"/>
<path d="M71 585Q81 574 91 585Q81 596 71 585Z" fill="#6e6e6e"/><circle cx="81" cy="585" r="3.6" fill="#fff"/><circle cx="81" cy="585" r="2.2" fill="#6e6e6e"/>
<path d="M103.6 579.2Q103.6 576.2 112 576.2Q120.4 576.2 120.4 579.2V590.7Q120.4 593.6 112 593.6Q103.6 593.6 103.6 590.7Z" fill="#dcdcdc" stroke="#777" stroke-width="1.2"/><path d="M103.6 579.2Q112 582.7 120.4 579.2" stroke="#999" stroke-width="0.9" fill="none"/>
<path d="M71 615Q81 604 91 615Q81 626 71 615Z" fill="#6e6e6e"/><circle cx="81" cy="615" r="3.6" fill="#fff"/><circle cx="81" cy="615" r="2.2" fill="#6e6e6e"/>
<path d="M103.6 609.2Q103.6 606.2 112 606.2Q120.4 606.2 120.4 609.2V620.7Q120.4 623.6 112 623.6Q103.6 623.6 103.6 620.7Z" fill="#dcdcdc" stroke="#777" stroke-width="1.2"/><path d="M103.6 609.2Q112 612.7 120.4 609.2" stroke="#999" stroke-width="0.9" fill="none"/>
<path d="M71 645Q81 634 91 645Q81 656 71 645Z" fill="#6e6e6e"/><circle cx="81" cy="645" r="3.6" fill="#fff"/><circle cx="81" cy="645" r="2.2" fill="#6e6e6e"/>
<path d="M103.6 639.2Q103.6 636.2 112 636.2Q120.4 636.2 120.4 639.2V650.7Q120.4 653.6 112 653.6Q103.6 653.6 103.6 650.7Z" fill="#dcdcdc" stroke="#777" stroke-width="1.2"/><path d="M103.6 639.2Q112 642.7 120.4 639.2" stroke="#999" stroke-width="0.9" fill="none"/>
<path d="M22.5 672.5L27.0 677.5L31.5 672.5" stroke="#333" stroke-width="1.4" fill="none"/>
<path d="M48.3 675Q58.3 664 68.3 675Q58.3 686 48.3 675Z" fill="#6e6e6e"/><circle cx="58.3" cy="675" r="3.6" fill="#fff"/><circle cx="58.3" cy="675" r="2.2" fill="#6e6e6e"/>
<path d="M80.6 682.5V667.3H87L89 669.5H98.4V682.5Z" fill="#f2f2f2" stroke="#777" stroke-width="1.2" stroke-linejoin="round"/><path d="M80.6 670.1H98.4" stroke="#777" stroke-width="1"/><rect x="81.2" y="667.8" width="6" height="2" fill="#bbb"/>
<path d="M71.5 705Q81 695 90.5 705Q81 715 71.5 705Z" fill="none" stroke="#777" stroke-width="1.2"/><circle cx="81" cy="705" r="3.2" fill="none" stroke="#777" stroke-width="1.1"/><path d="M75 698L87.5 712" stroke="#777" stroke-width="1.3"/>
<path d="M103.5 697.0H118.5M103.5 697.0V712.5M103.5 712.5H110M118.5 697.0V705.5" stroke="#666" stroke-width="1.2" fill="none"/><rect x="102" y="695.5" width="3" height="3" fill="#2a88d8"/><rect x="117" y="695.5" width="3" height="3" fill="#2a88d8"/><rect x="102" y="711.0" width="3" height="3" fill="#2a88d8"/><path d="M112 714.5L113 711.0L119.5 705.0L122 707.5L115.5 713.5Z" fill="#f3a81c"/><path d="M119 705.5L120.5 704.0L123 706.5L121.5 708.0Z" fill="#e23b3b"/><path d="M112 714.5L112.8 712.1L114.4 713.7Z" fill="#555"/>
<path d="M71.5 735Q81 725 90.5 735Q81 745 71.5 735Z" fill="none" stroke="#777" stroke-width="1.2"/><circle cx="81" cy="735" r="3.2" fill="none" stroke="#777" stroke-width="1.1"/><path d="M75 728L87.5 742" stroke="#777" stroke-width="1.3"/>
<path d="M103.5 727.0H118.5M103.5 727.0V742.5M103.5 742.5H110M118.5 727.0V735.5" stroke="#666" stroke-width="1.2" fill="none"/><rect x="102" y="725.5" width="3" height="3" fill="#2a88d8"/><rect x="117" y="725.5" width="3" height="3" fill="#2a88d8"/><rect x="102" y="741.0" width="3" height="3" fill="#2a88d8"/><path d="M112 744.5L113 741.0L119.5 735.0L122 737.5L115.5 743.5Z" fill="#f3a81c"/><path d="M119 735.5L120.5 734.0L123 736.5L121.5 738.0Z" fill="#e23b3b"/><path d="M112 744.5L112.8 742.1L114.4 743.7Z" fill="#555"/>
<path d="M71 765Q81 754 91 765Q81 776 71 765Z" fill="#6e6e6e"/><circle cx="81" cy="765" r="3.6" fill="#fff"/><circle cx="81" cy="765" r="2.2" fill="#6e6e6e"/>
<path d="M103.5 757.0H118.5M103.5 757.0V772.5M103.5 772.5H110M118.5 757.0V765.5" stroke="#666" stroke-width="1.2" fill="none"/><rect x="102" y="755.5" width="3" height="3" fill="#2a88d8"/><rect x="117" y="755.5" width="3" height="3" fill="#2a88d8"/><rect x="102" y="771.0" width="3" height="3" fill="#2a88d8"/><path d="M112 774.5L113 771.0L119.5 765.0L122 767.5L115.5 773.5Z" fill="#f3a81c"/><path d="M119 765.5L120.5 764.0L123 766.5L121.5 768.0Z" fill="#e23b3b"/><path d="M112 774.5L112.8 772.1L114.4 773.7Z" fill="#555"/>
<path d="M77.0 414.3L79.6 412.1M84.8 414.3L87.4 412.1M92.5 414.3L95.1 412.1M100.2 414.3L102.9 412.1M108.0 414.3L110.6 412.1M115.8 414.3L118.4 412.1M123.5 414.3L126.1 412.1M131.2 414.3L133.8 412.1M139.0 414.3L141.6 412.1M146.8 414.3L149.3 412.1M154.5 414.3L157.1 412.1" stroke="#1f8bc9" stroke-width="2.5" stroke-linecap="square" fill="none"/>
<path d="M99.5 594.3L102.1 592.1M107.2 594.3L109.9 592.1M115.0 594.3L117.6 592.1M122.8 594.3L125.4 592.1M130.5 594.3L133.1 592.1M138.2 594.3L140.8 592.1M146.0 594.3L148.6 592.1M153.8 594.3L156.3 592.1M161.5 594.3L164.1 592.1M169.2 594.3L171.8 592.1M177.0 594.3L179.6 592.1M184.8 594.3L187.3 592.1M192.5 594.3L195.1 592.1M200.2 594.3L202.8 592.1" stroke="#1f8bc9" stroke-width="2.5" stroke-linecap="square" fill="none"/>
<ellipse cx="797" cy="931.3" rx="9.6" ry="4.6" fill="none" stroke="#333" stroke-width="1.4"/><path d="M797 920.5V941" stroke="#4a9ae0" stroke-width="1.6" stroke-dasharray="2.6 1.6"/><polygon points="800.5,925.3 804.5,927 801,929" fill="#333"/>
<polygon points="815,928.5 821.5,928.5 818.2,932.8" fill="#777"/>
<path d="M831.5 940V927L835 920.5L836 926L843 922.5L844 926.5H850V940Z" fill="#777"/><rect x="833.5" y="928.5" width="14.5" height="9.5" fill="#fff"/><rect x="834.5" y="929.5" width="12.5" height="7.5" fill="#4a9ae0"/>
<path d="M866 937L862 930.5Q862 929 863.5 929.5L867 933V921.5Q868.5 920 869.5 921.5V929.5V920Q871 918.5 872 920V929V921Q873.5 919.5 874.5 921V930L877 923.5Q878.5 922.5 879.5 924L877 935L875 940H868Z" fill="#fafafa" stroke="#777" stroke-width="0.9" stroke-linejoin="round"/>
<circle cx="901.5" cy="930" r="6.2" fill="#dcdcdc" stroke="#666" stroke-width="1.3"/><path d="M906 934.5L911 939.8" stroke="#7a5a3a" stroke-width="2"/><path d="M909 921.2H915M912 918.3V924.2M909 927H915" stroke="#555" stroke-width="1"/>
<rect x="927.5" y="920.5" width="20" height="19.5" fill="none" stroke="#555" stroke-width="1.2" stroke-dasharray="2 1.4"/><circle cx="935.8" cy="929" r="7.3" fill="#dcdcdc" stroke="#666" stroke-width="1.3"/><path d="M942.5 936L947 940.5" stroke="#7a5a3a" stroke-width="2"/>
<polygon points="955,929 961.5,929 958.2,933.2" fill="#777"/>
<rect x="970.5" y="922.5" width="19.5" height="13.5" fill="#fff" stroke="#777" stroke-width="1.6"/><rect x="973.5" y="925.3" width="13.5" height="8" fill="#aaa"/><rect x="977" y="936" width="6" height="2" fill="#777"/><rect x="974" y="938" width="12" height="1.6" fill="#777"/>
<polygon points="993.3,929 999.8,929 996.5,933.2" fill="#777"/>
<rect x="1008.3" y="920.3" width="17" height="17" fill="#777"/><rect x="1009.8" y="921.8" width="3.3" height="3.3" fill="#fafafa"/><rect x="1009.8" y="927.0999999999999" width="3.3" height="3.3" fill="#fafafa"/><rect x="1009.8" y="932.4" width="3.3" height="3.3" fill="#fafafa"/><rect x="1015.0999999999999" y="921.8" width="3.3" height="3.3" fill="#fafafa"/><rect x="1015.0999999999999" y="927.0999999999999" width="3.3" height="3.3" fill="#fafafa"/><rect x="1015.0999999999999" y="932.4" width="3.3" height="3.3" fill="#fafafa"/><rect x="1020.4" y="921.8" width="3.3" height="3.3" fill="#fafafa"/><rect x="1020.4" y="927.0999999999999" width="3.3" height="3.3" fill="#fafafa"/><rect x="1020.4" y="932.4" width="3.3" height="3.3" fill="#fafafa"/>
<polygon points="1032.3,929 1038.8,929 1035.5,933.2" fill="#777"/>
<rect x="1047.8" y="921" width="19.5" height="17" fill="#fff" stroke="#777" stroke-width="1.6"/><path d="M1057.5 921V938M1047.8 929.5H1067.3" stroke="#777" stroke-width="1.6"/><rect x="1050.5" y="923.6" width="4.5" height="3.4" fill="#bbb" stroke="#999" stroke-width="0.5"/><rect x="1050.5" y="932.1" width="4.5" height="3.4" fill="#bbb" stroke="#999" stroke-width="0.5"/><rect x="1060.2" y="923.6" width="4.5" height="3.4" fill="#bbb" stroke="#999" stroke-width="0.5"/><rect x="1060.2" y="932.1" width="4.5" height="3.4" fill="#bbb" stroke="#999" stroke-width="0.5"/>
<polygon points="1071.3,929 1077.8,929 1074.5,933.2" fill="#777"/>
</svg>
</body></html>
